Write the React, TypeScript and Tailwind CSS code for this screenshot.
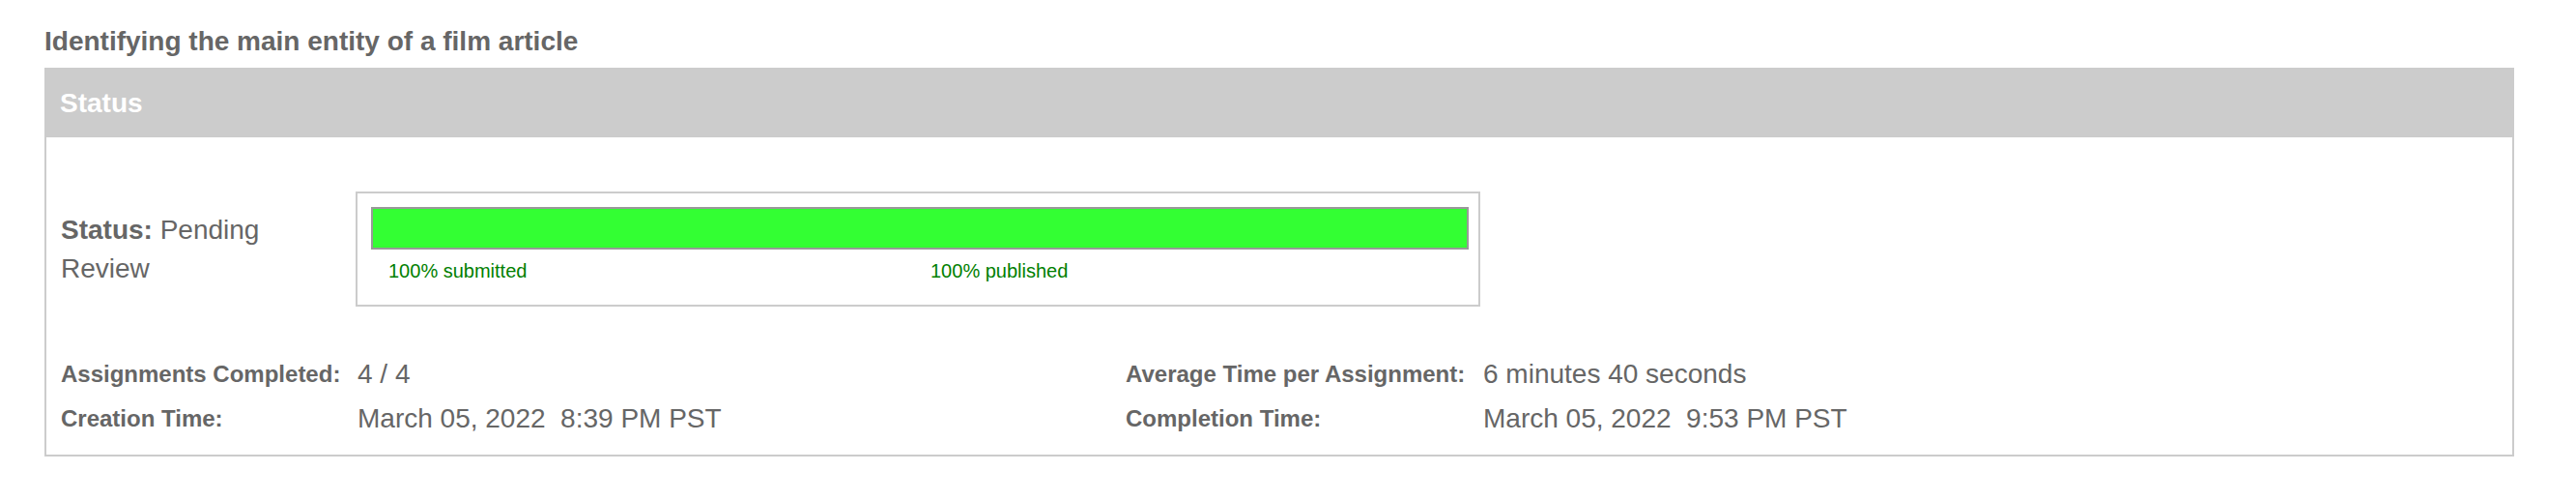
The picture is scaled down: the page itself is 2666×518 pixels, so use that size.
import React from 'react';

interface StatRow {
  label: string;
  value: string;
}

const leftStats: StatRow[] = [
  { label: 'Assignments Completed:', value: '4 / 4' },
  { label: 'Creation Time:', value: 'March 05, 2022  8:39 PM PST' },
];

const rightStats: StatRow[] = [
  { label: 'Average Time per Assignment:', value: '6 minutes 40 seconds' },
  { label: 'Completion Time:', value: 'March 05, 2022  9:53 PM PST' },
];

const ProgressBox: React.FC<{ submitted: number; published: number }> = ({
  submitted,
  published,
}) => (
  <div className="w-[1164px] h-[119px] shrink-0 border-2 border-[#cccccc] pt-[14px] pl-[14px] pr-[10px]">
    <div className="h-[44px] border-2 border-[#999999] bg-[#dddddd]">
      <div className="h-full bg-[#33ff33]" style={{ width: `${submitted}%` }} />
    </div>
    <div className="mt-[10px] grid grid-cols-2 text-[20px] leading-[24px] text-[#008000]">
      <span className="pl-[18px]">{submitted}% submitted</span>
      <span className="pl-[11px]">{published}% published</span>
    </div>
  </div>
);

export default function App() {
  return (
    <div
      className="min-h-[518px] bg-white pl-[46px] pr-[64px] text-[#666666]"
      style={{ fontFamily: '"Liberation Sans", Arial, Helvetica, sans-serif' }}
    >
      <h1 className="pt-[23px] pb-[7px] text-[28px] leading-[40px] font-bold">
        Identifying the main entity of a film article
      </h1>

      <div className="w-[2556px] border-2 border-[#cccccc]">
        <div className="h-[70px] bg-[#cccccc] pl-[14px] flex items-center text-[28px] font-bold text-white">
          Status
        </div>

        <div className="px-[15px] pb-[14px]">
          <div className="mt-[56px] flex items-center">
            <div className="w-[305px] shrink-0 pr-[70px] text-[28px] leading-[40px]">
              <span className="font-bold">Status:</span> <span>Pending Review</span>
            </div>
            <ProgressBox submitted={100} published={100} />
          </div>

          <div className="mt-[47px] grid grid-cols-[307px_795px_370px_1fr]">
            {leftStats.map((left, i) => {
              const right = rightStats[i];
              return (
                <React.Fragment key={left.label}>
                  <div className="h-[46px] flex items-center text-[24px] font-bold">{left.label}</div>
                  <div className="h-[46px] flex items-center text-[28px] whitespace-pre">{left.value}</div>
                  <div className="h-[46px] flex items-center text-[24px] font-bold">{right.label}</div>
                  <div className="h-[46px] flex items-center text-[28px] whitespace-pre">{right.value}</div>
                </React.Fragment>
              );
            })}
          </div>
        </div>
      </div>
    </div>
  );
}
